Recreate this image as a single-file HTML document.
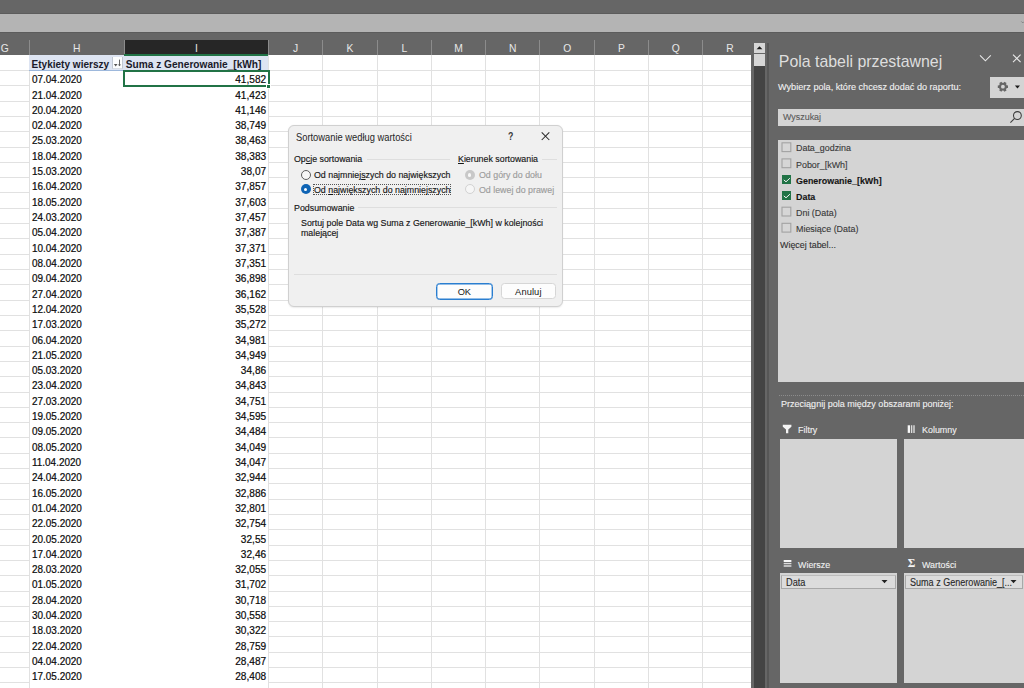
<!DOCTYPE html>
<html><head><meta charset="utf-8"><title>Excel</title>
<style>
*{box-sizing:border-box;margin:0;padding:0}
html,body{width:1024px;height:688px;overflow:hidden}
body{background:#666;font-family:"Liberation Sans",sans-serif;position:relative}
.a{position:absolute}
.hl{position:absolute;height:1px;background:#e1e1e1}
.vl{position:absolute;width:1px;background:#e1e1e1}
.ch{position:absolute;top:40.8px;height:15px;color:#e8e8e8;font-size:10.3px;line-height:15px;text-align:center}
.cs{position:absolute;top:40px;height:15px;width:1px;background:#8c8c8c}
.d{position:absolute;left:31.6px;font-size:10.1px;color:#0a0a0a;white-space:nowrap;line-height:12px;-webkit-text-stroke:0.2px #0a0a0a;transform:scaleX(0.985);transform-origin:0 0}
.n{position:absolute;right:757.9px;font-size:10.1px;color:#0a0a0a;white-space:nowrap;line-height:12px;-webkit-text-stroke:0.2px #0a0a0a;text-align:right;transform:scaleX(1.0);transform-origin:100% 0}
.pt{position:absolute;color:#1e1e1e;font-size:9.7px;white-space:nowrap;line-height:11px;-webkit-text-stroke:0.12px currentColor;transform:scaleX(0.92);transform-origin:0 0}
.dt{position:absolute;color:#161616;font-size:9.3px;white-space:nowrap;line-height:11px;-webkit-text-stroke:0.15px currentColor;transform:scaleX(0.95);transform-origin:0 0}
</style></head><body>

<div class="a" style="left:0;top:13px;width:1024px;height:1px;background:#5c5c5c"></div>
<div class="a" style="left:0;top:14px;width:1024px;height:18px;background:#b4b4b4"></div>
<div class="a" style="left:0;top:32px;width:1024px;height:1px;background:#5c5c5c"></div>
<svg class="a" style="left:1020px;top:17.5px" width="4" height="8" viewBox="0 0 6 8"><path d="M2 3.2l2.2 2.2 2.2-2.2" stroke="#6a6a6a" stroke-width="1" fill="none"/></svg>
<div class="a" style="left:0;top:55.3px;width:751px;height:633px;background:#fff"></div>
<div class="ch" style="left:-20px;width:49.3px">G</div>
<div class="ch" style="left:29.3px;width:95.0px">H</div>
<div class="a" style="left:124.3px;top:40.3px;width:144.2px;height:13.7px;background:#262626"></div>
<div class="a" style="left:124.3px;top:53.9px;width:144.2px;height:1.8px;background:#217346;z-index:2"></div>
<div class="ch" style="left:124.3px;width:144.2px">I</div>
<div class="ch" style="left:268.5px;width:54.30000000000001px">J</div>
<div class="ch" style="left:322.8px;width:54.30000000000001px">K</div>
<div class="ch" style="left:377.1px;width:54.5px">L</div>
<div class="ch" style="left:431.6px;width:54.0px">M</div>
<div class="ch" style="left:485.6px;width:54.299999999999955px">N</div>
<div class="ch" style="left:539.9px;width:54.5px">O</div>
<div class="ch" style="left:594.4px;width:54.30000000000007px">P</div>
<div class="ch" style="left:648.7px;width:54.19999999999993px">Q</div>
<div class="ch" style="left:702.9px;width:54.30000000000007px">R</div>
<div class="cs" style="left:28.8px"></div>
<div class="cs" style="left:123.8px"></div>
<div class="cs" style="left:268.0px"></div>
<div class="cs" style="left:322.3px"></div>
<div class="cs" style="left:376.6px"></div>
<div class="cs" style="left:431.1px"></div>
<div class="cs" style="left:485.1px"></div>
<div class="cs" style="left:539.4px"></div>
<div class="cs" style="left:593.9px"></div>
<div class="cs" style="left:648.2px"></div>
<div class="cs" style="left:702.4px"></div>
<div class="hl" style="left:0;top:70.00px;width:29px"></div>
<div class="hl" style="left:268.5px;top:70.00px;width:482.5px"></div>
<div class="hl" style="left:0;top:85.31px;width:29px"></div>
<div class="hl" style="left:268.5px;top:85.31px;width:482.5px"></div>
<div class="hl" style="left:0;top:100.62px;width:29px"></div>
<div class="hl" style="left:268.5px;top:100.62px;width:482.5px"></div>
<div class="hl" style="left:0;top:115.93px;width:29px"></div>
<div class="hl" style="left:268.5px;top:115.93px;width:482.5px"></div>
<div class="hl" style="left:0;top:131.24px;width:29px"></div>
<div class="hl" style="left:268.5px;top:131.24px;width:482.5px"></div>
<div class="hl" style="left:0;top:146.55px;width:29px"></div>
<div class="hl" style="left:268.5px;top:146.55px;width:482.5px"></div>
<div class="hl" style="left:0;top:161.86px;width:29px"></div>
<div class="hl" style="left:268.5px;top:161.86px;width:482.5px"></div>
<div class="hl" style="left:0;top:177.17px;width:29px"></div>
<div class="hl" style="left:268.5px;top:177.17px;width:482.5px"></div>
<div class="hl" style="left:0;top:192.48px;width:29px"></div>
<div class="hl" style="left:268.5px;top:192.48px;width:482.5px"></div>
<div class="hl" style="left:0;top:207.79px;width:29px"></div>
<div class="hl" style="left:268.5px;top:207.79px;width:482.5px"></div>
<div class="hl" style="left:0;top:223.10px;width:29px"></div>
<div class="hl" style="left:268.5px;top:223.10px;width:482.5px"></div>
<div class="hl" style="left:0;top:238.41px;width:29px"></div>
<div class="hl" style="left:268.5px;top:238.41px;width:482.5px"></div>
<div class="hl" style="left:0;top:253.72px;width:29px"></div>
<div class="hl" style="left:268.5px;top:253.72px;width:482.5px"></div>
<div class="hl" style="left:0;top:269.03px;width:29px"></div>
<div class="hl" style="left:268.5px;top:269.03px;width:482.5px"></div>
<div class="hl" style="left:0;top:284.34px;width:29px"></div>
<div class="hl" style="left:268.5px;top:284.34px;width:482.5px"></div>
<div class="hl" style="left:0;top:299.65px;width:29px"></div>
<div class="hl" style="left:268.5px;top:299.65px;width:482.5px"></div>
<div class="hl" style="left:0;top:314.96px;width:29px"></div>
<div class="hl" style="left:268.5px;top:314.96px;width:482.5px"></div>
<div class="hl" style="left:0;top:330.27px;width:29px"></div>
<div class="hl" style="left:268.5px;top:330.27px;width:482.5px"></div>
<div class="hl" style="left:0;top:345.58px;width:29px"></div>
<div class="hl" style="left:268.5px;top:345.58px;width:482.5px"></div>
<div class="hl" style="left:0;top:360.89px;width:29px"></div>
<div class="hl" style="left:268.5px;top:360.89px;width:482.5px"></div>
<div class="hl" style="left:0;top:376.20px;width:29px"></div>
<div class="hl" style="left:268.5px;top:376.20px;width:482.5px"></div>
<div class="hl" style="left:0;top:391.51px;width:29px"></div>
<div class="hl" style="left:268.5px;top:391.51px;width:482.5px"></div>
<div class="hl" style="left:0;top:406.82px;width:29px"></div>
<div class="hl" style="left:268.5px;top:406.82px;width:482.5px"></div>
<div class="hl" style="left:0;top:422.13px;width:29px"></div>
<div class="hl" style="left:268.5px;top:422.13px;width:482.5px"></div>
<div class="hl" style="left:0;top:437.44px;width:29px"></div>
<div class="hl" style="left:268.5px;top:437.44px;width:482.5px"></div>
<div class="hl" style="left:0;top:452.75px;width:29px"></div>
<div class="hl" style="left:268.5px;top:452.75px;width:482.5px"></div>
<div class="hl" style="left:0;top:468.06px;width:29px"></div>
<div class="hl" style="left:268.5px;top:468.06px;width:482.5px"></div>
<div class="hl" style="left:0;top:483.37px;width:29px"></div>
<div class="hl" style="left:268.5px;top:483.37px;width:482.5px"></div>
<div class="hl" style="left:0;top:498.68px;width:29px"></div>
<div class="hl" style="left:268.5px;top:498.68px;width:482.5px"></div>
<div class="hl" style="left:0;top:513.99px;width:29px"></div>
<div class="hl" style="left:268.5px;top:513.99px;width:482.5px"></div>
<div class="hl" style="left:0;top:529.30px;width:29px"></div>
<div class="hl" style="left:268.5px;top:529.30px;width:482.5px"></div>
<div class="hl" style="left:0;top:544.61px;width:29px"></div>
<div class="hl" style="left:268.5px;top:544.61px;width:482.5px"></div>
<div class="hl" style="left:0;top:559.92px;width:29px"></div>
<div class="hl" style="left:268.5px;top:559.92px;width:482.5px"></div>
<div class="hl" style="left:0;top:575.23px;width:29px"></div>
<div class="hl" style="left:268.5px;top:575.23px;width:482.5px"></div>
<div class="hl" style="left:0;top:590.54px;width:29px"></div>
<div class="hl" style="left:268.5px;top:590.54px;width:482.5px"></div>
<div class="hl" style="left:0;top:605.85px;width:29px"></div>
<div class="hl" style="left:268.5px;top:605.85px;width:482.5px"></div>
<div class="hl" style="left:0;top:621.16px;width:29px"></div>
<div class="hl" style="left:268.5px;top:621.16px;width:482.5px"></div>
<div class="hl" style="left:0;top:636.47px;width:29px"></div>
<div class="hl" style="left:268.5px;top:636.47px;width:482.5px"></div>
<div class="hl" style="left:0;top:651.78px;width:29px"></div>
<div class="hl" style="left:268.5px;top:651.78px;width:482.5px"></div>
<div class="hl" style="left:0;top:667.09px;width:29px"></div>
<div class="hl" style="left:268.5px;top:667.09px;width:482.5px"></div>
<div class="hl" style="left:0;top:682.40px;width:29px"></div>
<div class="hl" style="left:268.5px;top:682.40px;width:482.5px"></div>
<div class="vl" style="left:28.8px;top:55.3px;height:633px"></div>
<div class="vl" style="left:268.0px;top:55.3px;height:633px"></div>
<div class="vl" style="left:322.3px;top:55.3px;height:633px"></div>
<div class="vl" style="left:376.6px;top:55.3px;height:633px"></div>
<div class="vl" style="left:431.1px;top:55.3px;height:633px"></div>
<div class="vl" style="left:485.1px;top:55.3px;height:633px"></div>
<div class="vl" style="left:539.4px;top:55.3px;height:633px"></div>
<div class="vl" style="left:593.9px;top:55.3px;height:633px"></div>
<div class="vl" style="left:648.2px;top:55.3px;height:633px"></div>
<div class="vl" style="left:702.4px;top:55.3px;height:633px"></div>
<div class="a" style="left:29.8px;top:70.5px;width:238.5px;height:620px;background:#fff"></div>
<div class="a" style="left:29.3px;top:55px;width:239.2px;height:15.6px;background:#dde4f2;border-bottom:1px solid #9db8dc"></div>
<div class="a" style="left:31.5px;top:59.2px;font-size:10.05px;font-weight:bold;color:#1a1a2a;line-height:12px;white-space:nowrap">Etykiety wierszy</div>
<div class="a" style="left:125.8px;top:59.2px;font-size:10.15px;font-weight:bold;color:#1a1a2a;line-height:12px;white-space:nowrap">Suma z Generowanie_[kWh]</div>
<div class="a" style="left:111.5px;top:56.8px;width:11.7px;height:12.3px;background:#fcfdfe;border-left:1px solid #c0c8d2;border-right:1px solid #c0c8d2;border-bottom:1px solid #d8dde4"></div>
<svg class="a" style="left:111px;top:57px" width="12" height="13" viewBox="0 0 12 13"><path d="M2.9 7.1h3.6l-1.8 2.3z" fill="#555"/><path d="M8.5 2.6v5.6" stroke="#555" stroke-width="0.9" fill="none"/><path d="M6.9 7.4h3.2l-1.6 1.9z" fill="#555"/></svg>
<div class="d" style="top:74.25px">07.04.2020</div>
<div class="n" style="top:74.25px">41,582</div>
<div class="d" style="top:89.56px">21.04.2020</div>
<div class="n" style="top:89.56px">41,423</div>
<div class="d" style="top:104.87px">20.04.2020</div>
<div class="n" style="top:104.87px">41,146</div>
<div class="d" style="top:120.18px">02.04.2020</div>
<div class="n" style="top:120.18px">38,749</div>
<div class="d" style="top:135.49px">25.03.2020</div>
<div class="n" style="top:135.49px">38,463</div>
<div class="d" style="top:150.80px">18.04.2020</div>
<div class="n" style="top:150.80px">38,383</div>
<div class="d" style="top:166.11px">15.03.2020</div>
<div class="n" style="top:166.11px">38,07</div>
<div class="d" style="top:181.42px">16.04.2020</div>
<div class="n" style="top:181.42px">37,857</div>
<div class="d" style="top:196.73px">18.05.2020</div>
<div class="n" style="top:196.73px">37,603</div>
<div class="d" style="top:212.04px">24.03.2020</div>
<div class="n" style="top:212.04px">37,457</div>
<div class="d" style="top:227.35px">05.04.2020</div>
<div class="n" style="top:227.35px">37,387</div>
<div class="d" style="top:242.66px">10.04.2020</div>
<div class="n" style="top:242.66px">37,371</div>
<div class="d" style="top:257.97px">08.04.2020</div>
<div class="n" style="top:257.97px">37,351</div>
<div class="d" style="top:273.28px">09.04.2020</div>
<div class="n" style="top:273.28px">36,898</div>
<div class="d" style="top:288.59px">27.04.2020</div>
<div class="n" style="top:288.59px">36,162</div>
<div class="d" style="top:303.90px">12.04.2020</div>
<div class="n" style="top:303.90px">35,528</div>
<div class="d" style="top:319.21px">17.03.2020</div>
<div class="n" style="top:319.21px">35,272</div>
<div class="d" style="top:334.52px">06.04.2020</div>
<div class="n" style="top:334.52px">34,981</div>
<div class="d" style="top:349.83px">21.05.2020</div>
<div class="n" style="top:349.83px">34,949</div>
<div class="d" style="top:365.14px">05.03.2020</div>
<div class="n" style="top:365.14px">34,86</div>
<div class="d" style="top:380.45px">23.04.2020</div>
<div class="n" style="top:380.45px">34,843</div>
<div class="d" style="top:395.76px">27.03.2020</div>
<div class="n" style="top:395.76px">34,751</div>
<div class="d" style="top:411.07px">19.05.2020</div>
<div class="n" style="top:411.07px">34,595</div>
<div class="d" style="top:426.38px">09.05.2020</div>
<div class="n" style="top:426.38px">34,484</div>
<div class="d" style="top:441.69px">08.05.2020</div>
<div class="n" style="top:441.69px">34,049</div>
<div class="d" style="top:457.00px">11.04.2020</div>
<div class="n" style="top:457.00px">34,047</div>
<div class="d" style="top:472.31px">24.04.2020</div>
<div class="n" style="top:472.31px">32,944</div>
<div class="d" style="top:487.62px">16.05.2020</div>
<div class="n" style="top:487.62px">32,886</div>
<div class="d" style="top:502.93px">01.04.2020</div>
<div class="n" style="top:502.93px">32,801</div>
<div class="d" style="top:518.24px">22.05.2020</div>
<div class="n" style="top:518.24px">32,754</div>
<div class="d" style="top:533.55px">20.05.2020</div>
<div class="n" style="top:533.55px">32,55</div>
<div class="d" style="top:548.86px">17.04.2020</div>
<div class="n" style="top:548.86px">32,46</div>
<div class="d" style="top:564.17px">28.03.2020</div>
<div class="n" style="top:564.17px">32,055</div>
<div class="d" style="top:579.48px">01.05.2020</div>
<div class="n" style="top:579.48px">31,702</div>
<div class="d" style="top:594.79px">28.04.2020</div>
<div class="n" style="top:594.79px">30,718</div>
<div class="d" style="top:610.10px">30.04.2020</div>
<div class="n" style="top:610.10px">30,558</div>
<div class="d" style="top:625.41px">18.03.2020</div>
<div class="n" style="top:625.41px">30,322</div>
<div class="d" style="top:640.72px">22.04.2020</div>
<div class="n" style="top:640.72px">28,759</div>
<div class="d" style="top:656.03px">04.04.2020</div>
<div class="n" style="top:656.03px">28,487</div>
<div class="d" style="top:671.34px">17.05.2020</div>
<div class="n" style="top:671.34px">28,408</div>
<div class="a" style="left:123.4px;top:69.8px;width:146.2px;height:17.2px;border:2px solid #217346"></div>
<div class="a" style="left:265.6px;top:83.6px;width:5.4px;height:5.2px;background:#217346;border:0.8px solid #fff"></div>
<div class="a" style="left:754.2px;top:42.7px;width:10.7px;height:10.4px;background:#d6d6d6"></div>
<svg class="a" style="left:754.2px;top:42.7px" width="11" height="11" viewBox="0 0 11 11"><path d="M2.6 6.3h5.8l-2.9-3.1z" fill="#1a1a1a"/></svg>
<div class="a" style="left:754.2px;top:53.8px;width:10.7px;height:12.2px;background:#d6d6d6"></div>
<div class="a" style="left:754.2px;top:66px;width:10.7px;height:622px;background:#444"></div>
<div class="a" style="left:766.8px;top:42.7px;width:2.1px;height:646px;background:#575757"></div>
<div class="a" style="left:778.8px;top:51.9px;font-size:15.9px;color:#dedede;line-height:20px;white-space:nowrap">Pola tabeli przestawnej</div>
<svg class="a" style="left:976px;top:50px" width="48" height="16" viewBox="0 0 48 16"><path d="M4 5.4l5.4 5.4 5.4-5.4" stroke="#e8e8e8" stroke-width="1.1" fill="none"/><path d="M37 4.6l7.6 7.6M44.6 4.6l-7.6 7.6" stroke="#e8e8e8" stroke-width="1.1" fill="none"/></svg>
<div class="pt" style="left:778px;top:81.4px;color:#f0f0f0;transform:scaleX(0.942)">Wybierz pola, które chcesz dodać do raportu:</div>
<div class="a" style="left:990px;top:77.3px;width:40px;height:20.6px;background:#d4d4d4"></div>
<svg class="a" style="left:990px;top:77.3px" width="34" height="21" viewBox="0 0 34 21"><g transform="translate(12.9,9.7)" fill="#666"><circle r="3.9"/><rect x="-1.3" y="-5.1" width="2.6" height="10.2" transform="rotate(30)"/><rect x="-1.3" y="-5.1" width="2.6" height="10.2" transform="rotate(90)"/><rect x="-1.3" y="-5.1" width="2.6" height="10.2" transform="rotate(150)"/></g><circle cx="12.9" cy="9.7" r="1.9" fill="#d4d4d4"/><path d="M24.9 8.4h5.1l-2.55 3.2z" fill="#1a1a1a"/></svg>
<div class="a" style="left:778px;top:109.4px;width:250px;height:16.6px;background:#d4d4d4"></div>
<div class="pt" style="left:782.8px;top:111px;color:#5a5a5a">Wyszukaj</div>
<svg class="a" style="left:1006px;top:109.3px" width="18" height="17" viewBox="0 0 18 17"><circle cx="11.4" cy="6.5" r="3.9" stroke="#3c3c3c" stroke-width="1.05" fill="none"/><path d="M8.6 9.3L4.4 13.6" stroke="#3c3c3c" stroke-width="1.1"/></svg>
<div class="a" style="left:778px;top:139.7px;width:250px;height:242.3px;background:#d4d4d4"></div>
<svg class="a" style="left:779px;top:140px" width="14" height="14" viewBox="0 0 14 14"><rect x="3.00" y="2.80" width="8.8" height="8.8" stroke="#a2a2a2" stroke-width="1.1" fill="#d6d6d6"/></svg>
<div class="pt" style="left:796px;top:142.40px;color:#383838;">Data_godzina</div>
<svg class="a" style="left:779px;top:156px" width="14" height="14" viewBox="0 0 14 14"><rect x="3.00" y="2.90" width="8.8" height="8.8" stroke="#a2a2a2" stroke-width="1.1" fill="#d6d6d6"/></svg>
<div class="pt" style="left:796px;top:158.50px;color:#383838;">Pobor_[kWh]</div>
<div class="a" style="left:781.5px;top:174.50px;width:9.8px;height:9.8px;background:#217346"></div>
<svg class="a" style="left:781.5px;top:174.50px" width="10" height="10" viewBox="0 0 10 10"><path d="M1.8 4.9l2.2 1.9 3.9-3.6" stroke="#f4f4f4" stroke-width="1" fill="none"/></svg>
<div class="pt" style="left:796px;top:174.60px;font-weight:bold;color:#141414;">Generowanie_[kWh]</div>
<div class="a" style="left:781.5px;top:190.60px;width:9.8px;height:9.8px;background:#217346"></div>
<svg class="a" style="left:781.5px;top:190.60px" width="10" height="10" viewBox="0 0 10 10"><path d="M1.8 4.9l2.2 1.9 3.9-3.6" stroke="#f4f4f4" stroke-width="1" fill="none"/></svg>
<div class="pt" style="left:796px;top:190.70px;font-weight:bold;color:#141414;">Data</div>
<svg class="a" style="left:779px;top:204px" width="14" height="14" viewBox="0 0 14 14"><rect x="3.00" y="3.20" width="8.8" height="8.8" stroke="#a2a2a2" stroke-width="1.1" fill="#d6d6d6"/></svg>
<div class="pt" style="left:796px;top:206.80px;color:#383838;">Dni (Data)</div>
<svg class="a" style="left:779px;top:220px" width="14" height="14" viewBox="0 0 14 14"><rect x="3.00" y="3.30" width="8.8" height="8.8" stroke="#a2a2a2" stroke-width="1.1" fill="#d6d6d6"/></svg>
<div class="pt" style="left:796px;top:222.90px;color:#383838;">Miesiące (Data)</div>
<div class="pt" style="left:780px;top:238.9px;color:#303030">Więcej tabel...</div>
<div class="a" style="left:779px;top:394.7px;width:245px;height:0;border-top:1px dotted #8c8c8c"></div>
<div class="pt" style="left:780.6px;top:398.3px;color:#f0f0f0;transform:scaleX(0.932)">Przeciągnij pola między obszarami poniżej:</div>
<svg class="a" style="left:782px;top:424px" width="10" height="10" viewBox="0 0 10 10"><path d="M0.8 0.8h8.6v1.9L6.3 5.6v3.6H4V5.6L0.8 2.7z" fill="#f4f4f4"/></svg>
<div class="pt" style="left:797.5px;top:423.8px;color:#f0f0f0">Filtry</div>
<svg class="a" style="left:907px;top:424px" width="10" height="10" viewBox="0 0 10 10"><path d="M0.7 1.3h2.3v7.6H0.7z" fill="#f8f8f8"/><path d="M3.9 1.3h1.4v7.6H3.9zM6.3 1.3h1.4v7.6H6.3z" fill="#dcdcdc"/></svg>
<div class="pt" style="left:921.6px;top:423.8px;color:#f0f0f0">Kolumny</div>
<div class="a" style="left:780px;top:438.6px;width:117px;height:109.4px;background:#d4d4d4"></div>
<div class="a" style="left:903.5px;top:438.6px;width:121px;height:109.4px;background:#d4d4d4"></div>
<svg class="a" style="left:783px;top:559px" width="10" height="10" viewBox="0 0 10 10"><path d="M0.7 1h7.7v2.1H0.7z" fill="#f8f8f8"/><path d="M0.7 4h7.7v1.2H0.7zM0.7 6.2h7.7v1.6H0.7z" fill="#dcdcdc"/></svg>
<div class="pt" style="left:797.5px;top:559px;color:#f0f0f0">Wiersze</div>
<div class="a" style="left:907.8px;top:556.9px;font-family:'Liberation Serif',serif;font-size:11.5px;font-weight:bold;color:#f4f4f4;line-height:12px">Σ</div>
<div class="pt" style="left:921.6px;top:558.9px;color:#f0f0f0">Wartości</div>
<div class="a" style="left:780px;top:572.5px;width:117px;height:110.7px;background:#d4d4d4"></div>
<div class="a" style="left:903.5px;top:572.5px;width:121px;height:110.7px;background:#d4d4d4"></div>
<div class="a" style="left:780.6px;top:575px;width:115.2px;height:14.3px;background:#dcdcdc;border:1px solid #a8a8a8;border-top-color:#bcbcbc"></div>
<div class="pt" style="left:785.5px;top:576.9px;font-size:10px;color:#2a2a2a;transform:scaleX(0.92)">Data</div>
<svg class="a" style="left:880px;top:578px" width="10" height="8" viewBox="0 0 10 8"><path d="M1.5 2h6l-3 3.2z" fill="#222"/></svg>
<div class="a" style="left:904.8px;top:575px;width:118px;height:14.3px;background:#dcdcdc;border:1px solid #a8a8a8;border-top-color:#bcbcbc"></div>
<div class="pt" style="left:909.8px;top:576.9px;font-size:10px;color:#2a2a2a;transform:scaleX(0.905)">Suma z Generowanie_[...</div>
<svg class="a" style="left:1009px;top:578px" width="10" height="8" viewBox="0 0 10 8"><path d="M1.5 2h6l-3 3.2z" fill="#222"/></svg>
<div class="a" style="left:288.4px;top:125.1px;width:274.4px;height:181.6px;background:#f0f0f0;border:1px solid #d0d0d0;border-radius:6px;box-shadow:0 0.5px 1.5px rgba(0,0,0,0.08)"></div>
<div class="a" style="left:296.1px;top:132.3px;font-size:10.1px;line-height:11px;color:#262626;white-space:nowrap;transform:scaleX(0.925);transform-origin:0 0">Sortowanie według wartości</div>
<div class="a" style="left:507.9px;top:131.4px;font-size:10.3px;font-weight:bold;color:#3a3a3a;line-height:12px;transform:scaleX(0.85);transform-origin:0 0">?</div>
<svg class="a" style="left:539.5px;top:131px" width="11" height="11" viewBox="0 0 11 11"><path d="M1.7 1.4l7.6 7.6M9.3 1.4l-7.6 7.6" stroke="#2a2a2a" stroke-width="1.05" fill="none"/></svg>
<div class="dt" style="left:294px;top:154.3px">Op<u>c</u>je sortowania</div>
<div class="a" style="left:367px;top:158.6px;width:83px;height:1px;background:#dedede"></div>
<div class="dt" style="left:458.4px;top:154.3px"><u>K</u>ierunek sortowania</div>
<div class="a" style="left:542px;top:158.6px;width:15px;height:1px;background:#dedede"></div>
<div class="a" style="left:300.6px;top:169.9px;width:10.1px;height:10.1px;border:1px solid #5e5e5e;border-radius:50%;background:#f7f7f7"></div>
<div class="dt" style="left:314px;top:170.4px">Od najmniej<u>s</u>zych do największych</div>
<div class="a" style="left:300.6px;top:184.4px;width:10.1px;height:10.1px;border-radius:50%;background:#0f64b4"></div>
<div class="a" style="left:304px;top:187.8px;width:3.3px;height:3.3px;border-radius:50%;background:#fff"></div>
<div class="a" style="left:312.5px;top:183.7px;width:138.3px;height:11.6px;border:1px dotted #555"></div>
<div class="dt" style="left:314px;top:185px">Od <u>n</u>ajwiększych do najmniejszych</div>
<div class="a" style="left:464.6px;top:169.9px;width:10.1px;height:10.1px;border-radius:50%;background:#c8c8c8"></div>
<div class="a" style="left:468.1px;top:173.4px;width:3.2px;height:3.2px;border-radius:50%;background:#f8f8f8"></div>
<div class="dt" style="left:478.5px;top:170.4px;color:#9c9c9c">Od góry do dołu</div>
<div class="a" style="left:464.6px;top:184.4px;width:10.1px;height:10.1px;border:1px solid #d2d2d2;border-radius:50%;background:#f6f6f6"></div>
<div class="dt" style="left:478.5px;top:185px;color:#9c9c9c">Od lewej do prawej</div>
<div class="dt" style="left:294px;top:202.5px">Podsumowanie</div>
<div class="a" style="left:358px;top:207px;width:199px;height:1px;background:#dedede"></div>
<div class="dt" style="left:301px;top:217.9px">Sortuj pole Data wg Suma z Generowanie_[kWh] w kolejności</div>
<div class="dt" style="left:301px;top:228.1px">malejącej</div>
<div class="a" style="left:294px;top:273.5px;width:263px;height:1px;background:#dedede"></div>
<div class="a" style="left:436.3px;top:283.4px;width:56.6px;height:16.3px;background:#fdfdfd;border:1px solid #2a7ed0;box-shadow:inset 0 0 0 0.4px #2a7ed0;border-radius:3.5px"></div>
<div class="a" style="left:436.3px;top:286.9px;width:56.1px;text-align:center;font-size:9.3px;line-height:11px;color:#161616">OK</div>
<div class="a" style="left:500.9px;top:283.2px;width:55.1px;height:16.3px;background:#fdfdfd;border:1px solid #d6d6d6;border-radius:3.5px"></div>
<div class="a" style="left:500.6px;top:286.9px;width:55.5px;text-align:center;font-size:9.3px;line-height:11px;color:#161616;letter-spacing:0.1px">Anuluj</div>
</body></html>
